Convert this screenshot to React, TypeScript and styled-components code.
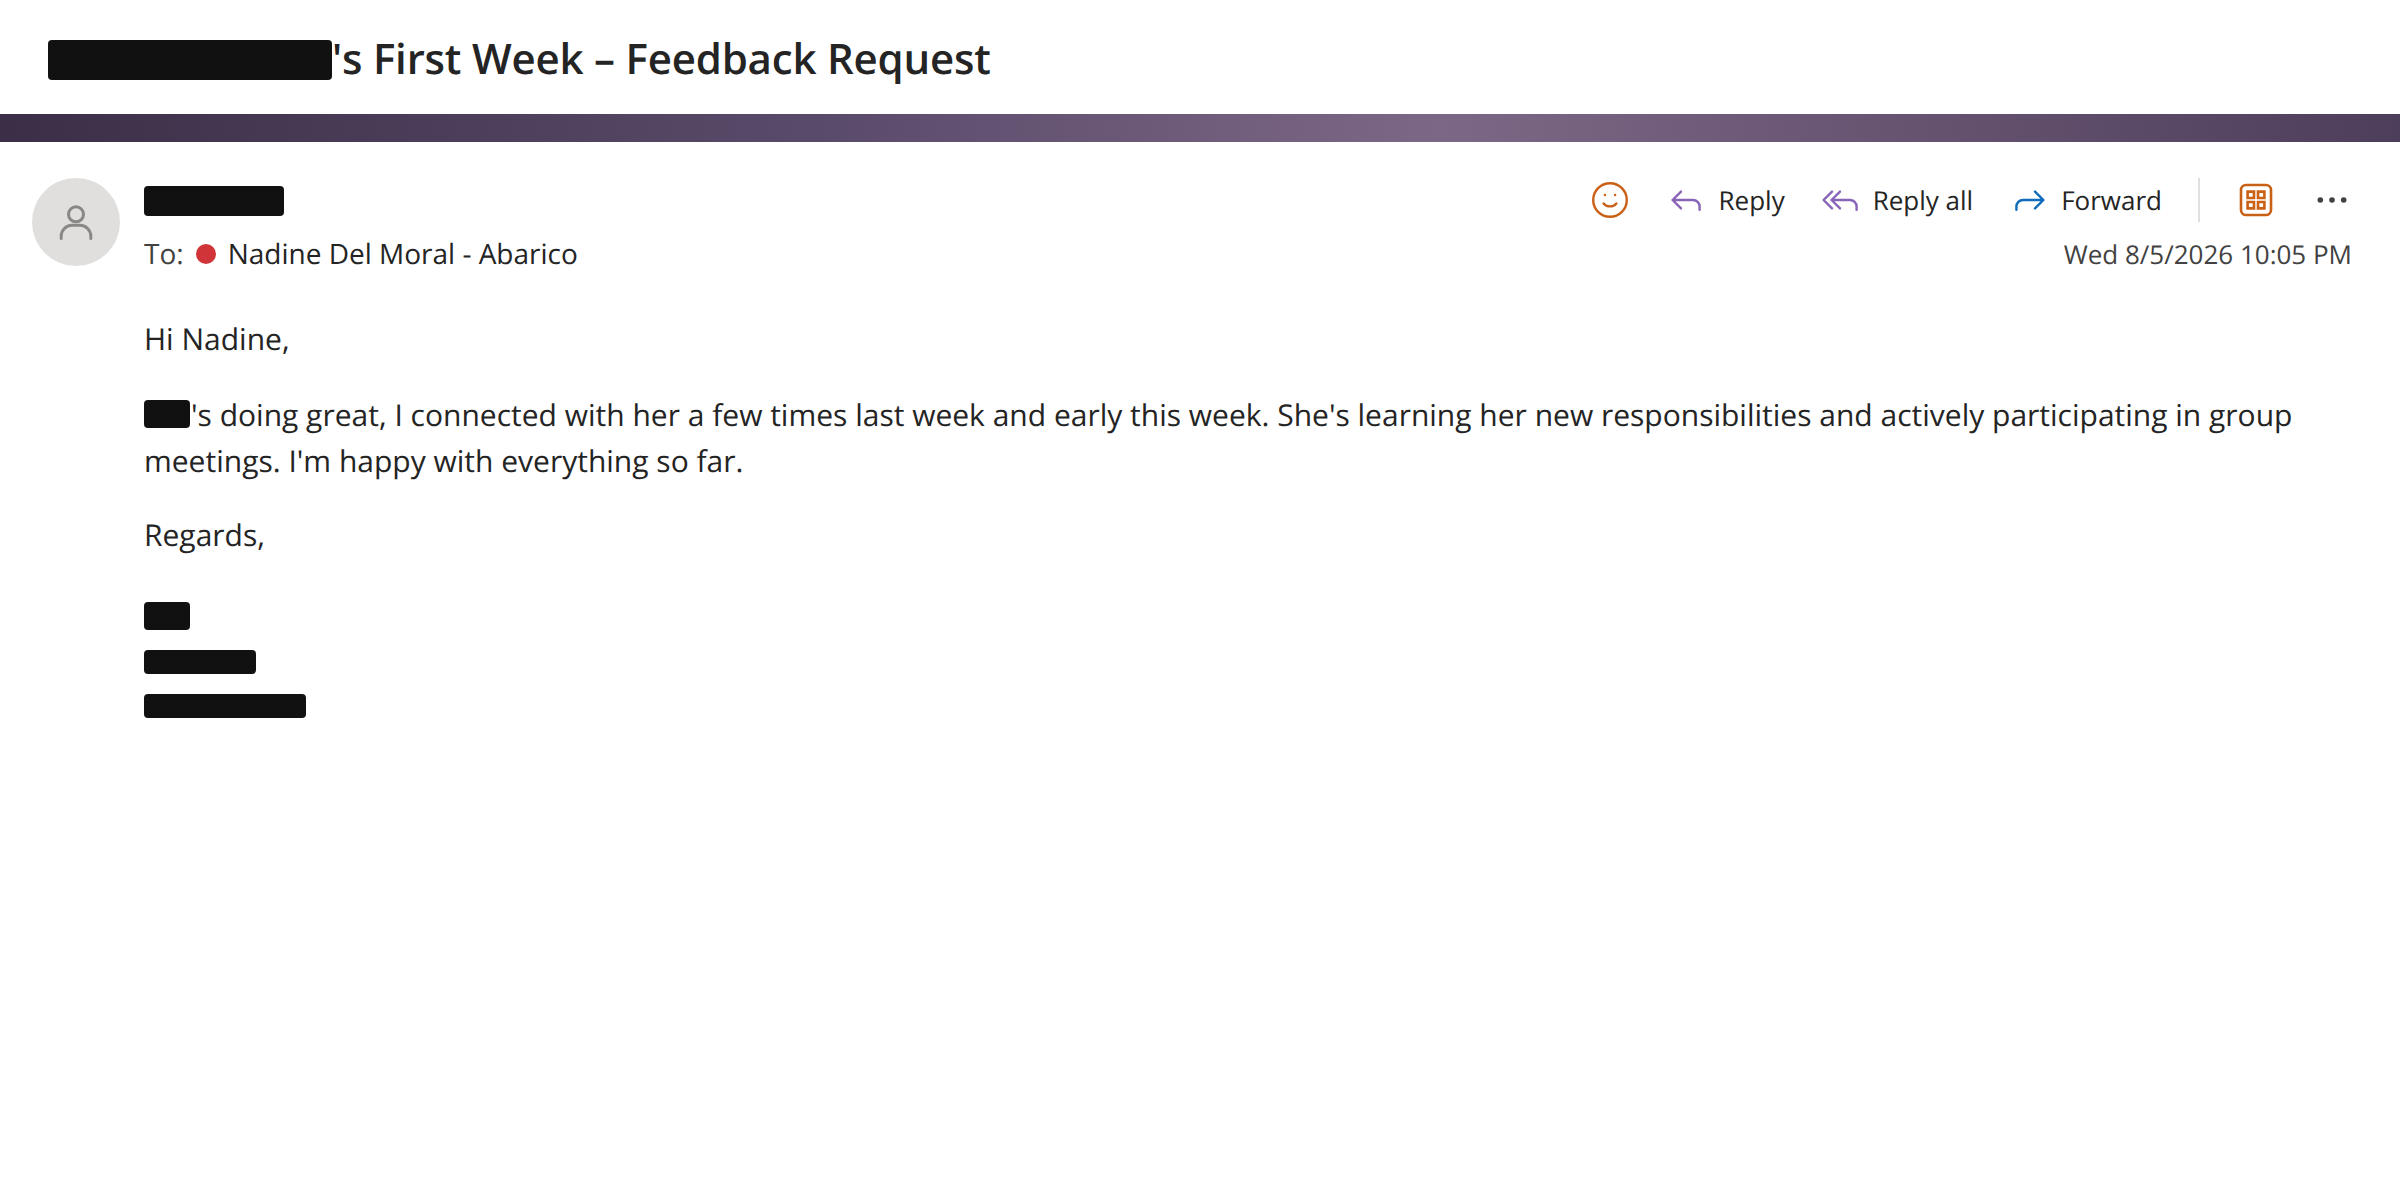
import React from "react";
import styled, { createGlobalStyle } from "styled-components";

const GlobalStyle = createGlobalStyle`
  body {
    margin: 0;
    background-color: #ffffff;
    color: #242424;
    font-family: "Open Sans", sans-serif;
    text-rendering: geometricPrecision;
  }
`;

const StyledMail = styled.div`
  width: 100%;
  min-height: 1200px;
  background-color: #ffffff;
`;

const Redacted = styled.span<{ $w: number; $h: number }>`
  display: block;
  flex-shrink: 0;
  width: ${({ $w }) => $w}px;
  height: ${({ $h }) => $h}px;
  border-radius: 4px;
  background-color: #111111;
`;

const InlineRedacted = styled(Redacted)`
  display: inline-block;
  margin-right: 1px;
  vertical-align: -2px;
`;

const Subject = styled.header`
  display: flex;
  align-items: center;
  height: 114px;
  padding: 0 48px;
  box-sizing: border-box;

  ${Redacted} {
    margin-top: 6px;
  }

  h1 {
    margin: 3px 0 0;
    font-size: 42px;
    font-weight: 600;
    line-height: 56px;
    letter-spacing: -0.2px;
  }
`;

const Banner = styled.div`
  height: 28px;
  background: linear-gradient(
    90deg,
    #3b2f47 0%,
    #5b4b6b 35%,
    #7d6786 60%,
    #5c4b68 88%,
    #4d3e5b 100%
  );
`;

const MessageHead = styled.section`
  display: flex;
  padding: 36px 48px 0 32px;
`;

const Avatar = styled.div`
  display: flex;
  align-items: center;
  justify-content: center;
  flex-shrink: 0;
  width: 88px;
  height: 88px;
  margin-right: 24px;
  border-radius: 50%;
  background-color: #e1dfdd;
`;

const Sender = styled.div`
  flex: 1;
  padding-top: 8px;
`;

const Recipient = styled.div`
  display: flex;
  align-items: center;
  height: 38px;
  margin-top: 19px;
  font-size: 28px;
  line-height: 38px;

  .label,
  .name {
    margin-top: -1px;
  }

  .label {
    color: #424242;
  }

  .status {
    width: 20px;
    height: 20px;
    margin: 0 12px;
    border-radius: 50%;
    background-color: #d13438;
  }
`;

const Side = styled.div`
  display: flex;
  flex-direction: column;
  align-items: flex-end;
`;

const Toolbar = styled.div`
  display: flex;
  align-items: center;
  gap: 36px;
  height: 44px;
`;

const Action = styled.button`
  display: flex;
  align-items: center;
  gap: 12px;
  padding: 0;
  border: none;
  background: none;
  color: #242424;
  font-family: inherit;
  font-size: 26px;
  line-height: 36px;
  text-rendering: inherit;
  cursor: pointer;
`;

const Divider = styled.span`
  width: 2px;
  height: 44px;
  background-color: #e0e0e0;
`;

const SentAt = styled.time`
  margin-top: 14px;
  color: #424242;
  font-size: 26px;
  line-height: 36px;
`;

const Icon = styled.svg<{ $color: string }>`
  display: block;
  width: 40px;
  height: 40px;
  fill: none;
  stroke: ${({ $color }) => $color};
  stroke-width: 1.2;
  stroke-linecap: round;
  stroke-linejoin: round;
`;

const Body = styled.article`
  padding: 43px 96px 0 144px;
  font-size: 30px;
  line-height: 46px;

  p {
    margin: 0 0 28px;
  }

  .greeting {
    margin-bottom: 30px;
  }
`;

const Signature = styled.div`
  display: flex;
  flex-direction: column;
  gap: 20px;
  margin-top: 44px;
`;

const ORANGE = "#ca6016";
const PURPLE = "#8764b8";
const BLUE = "#0f6cbd";

const App = () => {
  return (
    <>
      <GlobalStyle />
      <StyledMail>
        <Subject>
          <Redacted $w={284} $h={40} />
          <h1>'s First Week – Feedback Request</h1>
        </Subject>
        <Banner />
        <MessageHead>
          <Avatar>
            <Icon $color="#8a8886" viewBox="0 0 20 20">
              <circle cx="10" cy="6.15" r="3.75" strokeWidth="1.5" />
              <path
                d="M2.6 18.25v-1.2a5.4 5.4 0 0 1 5.4-5.4h4a5.4 5.4 0 0 1 5.4 5.4v1.2"
                strokeWidth="1.5"
              />
            </Icon>
          </Avatar>
          <Sender>
            <Redacted $w={140} $h={30} />
            <Recipient>
              <span className="label">To:</span>
              <span className="status" />
              <span className="name">Nadine Del Moral - Abarico</span>
            </Recipient>
          </Sender>
          <Side>
            <Toolbar>
              <Action>
                <Icon $color={ORANGE} viewBox="0.5 0 20 20">
                  <circle cx="10" cy="10" r="8.4" />
                  <circle cx="7.45" cy="7.5" r="0.6" fill={ORANGE} stroke="none" />
                  <circle cx="12.55" cy="7.5" r="0.6" fill={ORANGE} stroke="none" />
                  <path d="M6.8 11.7c.8 1 1.9 1.5 3.2 1.5s2.4-.5 3.2-1.5" />
                </Icon>
              </Action>
              <Action>
                <Icon $color={PURPLE} viewBox="0.5 0 20 20">
                  <path d="M7.5 5.8 3.3 10l4.2 4.2M3.3 10h10.2a3.3 3.3 0 0 1 3.3 3.3v1.6" />
                </Icon>
                Reply
              </Action>
              <Action>
                <Icon $color={PURPLE} viewBox="0.5 0 20 20">
                  <path d="M6 5.8 1.8 10 6 14.2" />
                  <path d="M10 5.8 5.8 10l4.2 4.2M5.8 10H15a3.3 3.3 0 0 1 3.3 3.3v1.6" />
                </Icon>
                Reply all
              </Action>
              <Action>
                <Icon $color={BLUE} viewBox="0 0 20 20">
                  <path d="M13 5.8 17.2 10 13 14.2M17.2 10H7a3.3 3.3 0 0 0-3.3 3.3v1.6" />
                </Icon>
                Forward
              </Action>
              <Divider />
              <Action>
                <Icon $color={ORANGE} viewBox="0 0 20 20">
                  <rect x="2.5" y="2.5" width="15" height="15" rx="2.5" strokeWidth="1.3" />
                  <path
                    d="M5.8 5.8H9V9H5.8zM11 5.8h3.2V9H11zM5.8 11H9v3.2H5.8zM11 11h3.2v3.2H11z"
                    strokeWidth="1.3"
                    strokeLinejoin="miter"
                  />
                </Icon>
              </Action>
              <Action>
                <Icon $color="none" viewBox="0 0 20 20">
                  <g fill="#424242">
                    <circle cx="4.15" cy="10" r="1.4" />
                    <circle cx="10" cy="10" r="1.4" />
                    <circle cx="15.85" cy="10" r="1.4" />
                  </g>
                </Icon>
              </Action>
            </Toolbar>
            <SentAt>Wed 8/5/2026 10:05 PM</SentAt>
          </Side>
        </MessageHead>
        <Body>
          <p className="greeting">Hi Nadine,</p>
          <p>
            <InlineRedacted $w={46} $h={28} />
            's doing great, I connected with her a few times last week and early
            this week. She's learning her new responsibilities and actively
            participating in group meetings. I'm happy with everything so far.
          </p>
          <p>Regards,</p>
          <Signature>
            <Redacted $w={46} $h={28} />
            <Redacted $w={112} $h={24} />
            <Redacted $w={162} $h={24} />
          </Signature>
        </Body>
      </StyledMail>
    </>
  );
};

export default App;
